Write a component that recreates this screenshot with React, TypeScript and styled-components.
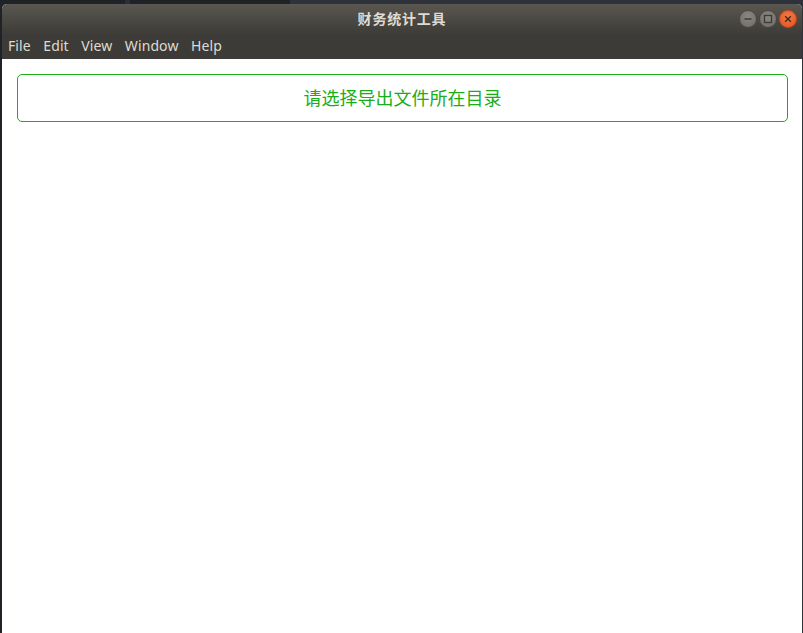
import React from "react";
import styled, { createGlobalStyle } from "styled-components";

const GlobalStyle = createGlobalStyle`
  html, body {
    margin: 0;
    padding: 0;
    background: #1f2328;
    font-family: "Noto Sans", "Noto Sans CJK SC", sans-serif;
  }
`;

const menuItems = ["File", "Edit", "View", "Window", "Help"];

export default function App() {
  return (
    <>
      <GlobalStyle />
      <SDesktop>
        <SWindow>
          <STitleBar>
            <STitle>财务统计工具</STitle>
            <SControls>
              <SControl>
                <svg width="10" height="10" viewBox="0 0 10 10">
                  <line x1="1.5" y1="5" x2="8.5" y2="5" stroke="#3c3b37" strokeWidth="1.4" />
                </svg>
              </SControl>
              <SControl>
                <svg width="10" height="10" viewBox="0 0 10 10">
                  <rect x="1.5" y="1.5" width="7" height="7" fill="none" stroke="#3c3b37" strokeWidth="1.3" />
                </svg>
              </SControl>
              <SControl $close>
                <svg width="10" height="10" viewBox="0 0 10 10">
                  <path d="M2.2 2.2 L7.8 7.8 M7.8 2.2 L2.2 7.8" stroke="#3c2a20" strokeWidth="1.4" />
                </svg>
              </SControl>
            </SControls>
          </STitleBar>
          <SMenuBar>
            {menuItems.map((m) => (
              <SMenuItem key={m}>{m}</SMenuItem>
            ))}
          </SMenuBar>
          <SContent>
            <SPickButton>请选择导出文件所在目录</SPickButton>
          </SContent>
        </SWindow>
      </SDesktop>
    </>
  );
}

const SDesktop = styled.div`
  height: 633px;
  box-sizing: border-box;
  padding: 4px 1px 0 2px;
  display: flex;
  background: linear-gradient(to right, #1f2328 0, #1f2328 125px, #2a2f36 125px, #2a2f36 130px, #1f2328 130px, #1f2328 290px, #2d323b 290px);
`;

const SWindow = styled.div`
  flex: 1;
  display: flex;
  flex-direction: column;
  border-radius: 5px 5px 0 0;
  overflow: hidden;
  background: #fff;
`;

const STitleBar = styled.div`
  height: 30px;
  position: relative;
  display: flex;
  align-items: center;
  justify-content: center;
  background: linear-gradient(to bottom, #5a5750 0%, #46443f 70%, #3d3c38 100%);
`;

const STitle = styled.div`
  color: #dfdbd2;
  font-size: 14px;
  font-weight: bold;
  letter-spacing: 0.8px;
  margin-top: -2px;
`;

const SControls = styled.div`
  position: absolute;
  right: 5px;
  top: 6px;
  display: flex;
  gap: 2px;
`;

const SControl = styled.div<{ $close?: boolean }>`
  width: 18px;
  height: 18px;
  border-radius: 50%;
  display: flex;
  align-items: center;
  justify-content: center;
  box-sizing: border-box;
  border: 1px solid ${(p) => (p.$close ? "#c7471a" : "#4a4844")};
  background: ${(p) =>
    p.$close
      ? "radial-gradient(circle at 50% 35%, #f47a45, #e05220)"
      : "radial-gradient(circle at 50% 35%, #8a8782, #6e6b66)"};
`;

const SMenuBar = styled.div`
  height: 25px;
  display: flex;
  align-items: center;
  gap: 12.5px;
  padding: 0 6px;
  background: #3c3b37;
`;

const SMenuItem = styled.span`
  color: #dfdbd2;
  font-size: 14px;
  letter-spacing: 0.1px;
  line-height: 1;
  margin-top: -2px;
`;

const SContent = styled.div`
  flex: 1;
  padding: 15px 14px 0 15px;
`;

const SPickButton = styled.div`
  height: 48px;
  box-sizing: border-box;
  border: 1px solid #1aad19;
  border-radius: 5px;
  display: flex;
  align-items: center;
  justify-content: center;
  color: #1aad19;
  font-size: 18px;
  font-family: "Noto Sans CJK SC", sans-serif;
  padding-bottom: 2px;
`;
